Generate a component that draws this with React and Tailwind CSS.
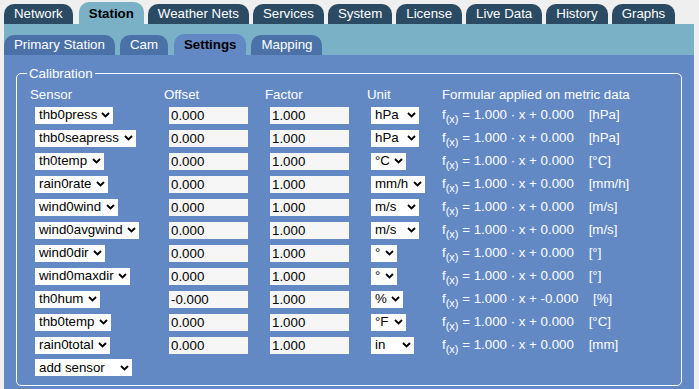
import { useState } from "react";

const mainTabs = [
  "Network",
  "Station",
  "Weather Nets",
  "Services",
  "System",
  "License",
  "Live Data",
  "History",
  "Graphs",
];

const subTabs = ["Primary Station", "Cam", "Settings", "Mapping"];

// sensor rows of the calibration table
const rows = [
  { sensor: "thb0press", sw: "w-[78px]", offset: "0.000", unit: "hPa", uw: "w-[48px]", add: "0.000", metric: "hPa" },
  { sensor: "thb0seapress", sw: "w-[101px]", offset: "0.000", unit: "hPa", uw: "w-[48px]", add: "0.000", metric: "hPa" },
  { sensor: "th0temp", sw: "w-[69px]", offset: "0.000", unit: "°C", uw: "w-[35px]", add: "0.000", metric: "°C" },
  { sensor: "rain0rate", sw: "w-[73px]", offset: "0.000", unit: "mm/h", uw: "w-[54px]", add: "0.000", metric: "mm/h" },
  { sensor: "wind0wind", sw: "w-[83px]", offset: "0.000", unit: "m/s", uw: "w-[48px]", add: "0.000", metric: "m/s" },
  { sensor: "wind0avgwind", sw: "w-[104px]", offset: "0.000", unit: "m/s", uw: "w-[48px]", add: "0.000", metric: "m/s" },
  { sensor: "wind0dir", sw: "w-[70px]", offset: "0.000", unit: "°", uw: "w-[26px]", add: "0.000", metric: "°" },
  { sensor: "wind0maxdir", sw: "w-[95px]", offset: "0.000", unit: "°", uw: "w-[26px]", add: "0.000", metric: "°" },
  { sensor: "th0hum", sw: "w-[65px]", offset: "-0.000", unit: "%", uw: "w-[32px]", add: "-0.000", metric: "%" },
  { sensor: "thb0temp", sw: "w-[76px]", offset: "0.000", unit: "°F", uw: "w-[35px]", add: "0.000", metric: "°C" },
  { sensor: "rain0total", sw: "w-[75px]", offset: "0.000", unit: "in", uw: "w-[43px]", add: "0.000", metric: "mm" },
];

const Chevron = () => (
  <svg width="9" height="6" viewBox="0 0 9 6" className="shrink-0">
    <path d="M1 1l3.5 3.5L8 1" fill="none" stroke="#000" strokeWidth="1.9" />
  </svg>
);

const FakeSelect = ({ value, width }) => (
  <div
    className={`${width} h-[17px] bg-white flex items-center justify-between pl-[4px] pr-[3px] text-black leading-none`}
  >
    <span className="whitespace-nowrap">{value}</span>
    <Chevron />
  </div>
);

const App = () => {
  const [activeTab] = useState("Station");
  const [activeSub] = useState("Settings");

  return (
    <div
      className="min-h-screen bg-[#efefef] pt-[2px] pl-[4px] pr-[5px] text-[13.3px]"
      style={{ fontFamily: '"Liberation Sans", Arial, Helvetica, sans-serif' }}
    >
      {/* top tabs */}
      <div className="flex items-end gap-[4px] h-[22px]">
        {mainTabs.map((tab) =>
          tab === activeTab ? (
            <div
              key={tab}
              className="h-[22px] px-[10px] ml-[2px] rounded-t-[10px] bg-[#7ab1c7] text-black font-bold leading-[24px]"
            >
              {tab}
            </div>
          ) : (
            <div
              key={tab}
              className="h-[20px] px-[10px] rounded-t-[10px] bg-[#2b4a63] text-white leading-[20px]"
            >
              {tab}
            </div>
          )
        )}
      </div>

      {/* sub tabs */}
      <div className="bg-[#7ab1c7] pt-[10px] flex items-end gap-[5px]">
        {subTabs.map((tab) =>
          tab === activeSub ? (
            <div
              key={tab}
              className="h-[21px] px-[10px] ml-[1px] rounded-t-[10px] bg-[#6389c5] text-black font-bold leading-[22px]"
            >
              {tab}
            </div>
          ) : (
            <div
              key={tab}
              className="h-[20px] px-[10px] rounded-t-[10px] bg-[#4a72a9] text-white leading-[20px]"
            >
              {tab}
            </div>
          )
        )}
      </div>

      {/* panel */}
      <div className="bg-[#6389c5] px-[12px] pt-[11px] pb-[4px] min-h-[335px]">
        <fieldset className="border border-white rounded-[5px] pl-[13px] pr-[10px] pt-[4px] pb-[9px] text-white">
          <legend className="ml-[-3px] px-[2px] leading-[15px]">Calibration</legend>

          <div className="grid grid-cols-[134px_101px_102px_75px_1fr] h-[17px] items-center mb-[4px]">
            <span>Sensor</span>
            <span>Offset</span>
            <span>Factor</span>
            <span>Unit</span>
            <span>Formular applied on metric data</span>
          </div>

          <div className="flex flex-col gap-[6px]">
            {rows.map((row) => (
              <div
                key={row.sensor}
                className="grid grid-cols-[134px_101px_102px_75px_1fr] h-[17px] items-center"
              >
                <div className="pl-[5px]">
                  <FakeSelect value={row.sensor} width={row.sw} />
                </div>
                <div className="pl-[5px]">
                  <div className="w-[79px] h-[17px] bg-[#f6f6f6] text-black pl-[2px] leading-[17px]">
                    {row.offset}
                  </div>
                </div>
                <div className="pl-[5px]">
                  <div className="w-[79px] h-[17px] bg-[#f6f6f6] text-black pl-[2px] leading-[17px]">
                    1.000
                  </div>
                </div>
                <div className="pl-[4px]">
                  <FakeSelect value={row.unit} width={row.uw} />
                </div>
                <div className="whitespace-pre leading-[17px]">
                  f<span className="text-[11px] relative top-[4px]">(x)</span>
                  {` = 1.000 · x + ${row.add}    [${row.metric}]`}
                </div>
              </div>
            ))}
            <div className="h-[17px] pl-[5px]">
              <FakeSelect value="add sensor" width="w-[97px]" />
            </div>
          </div>
        </fieldset>
      </div>
    </div>
  );
};

export default App;
